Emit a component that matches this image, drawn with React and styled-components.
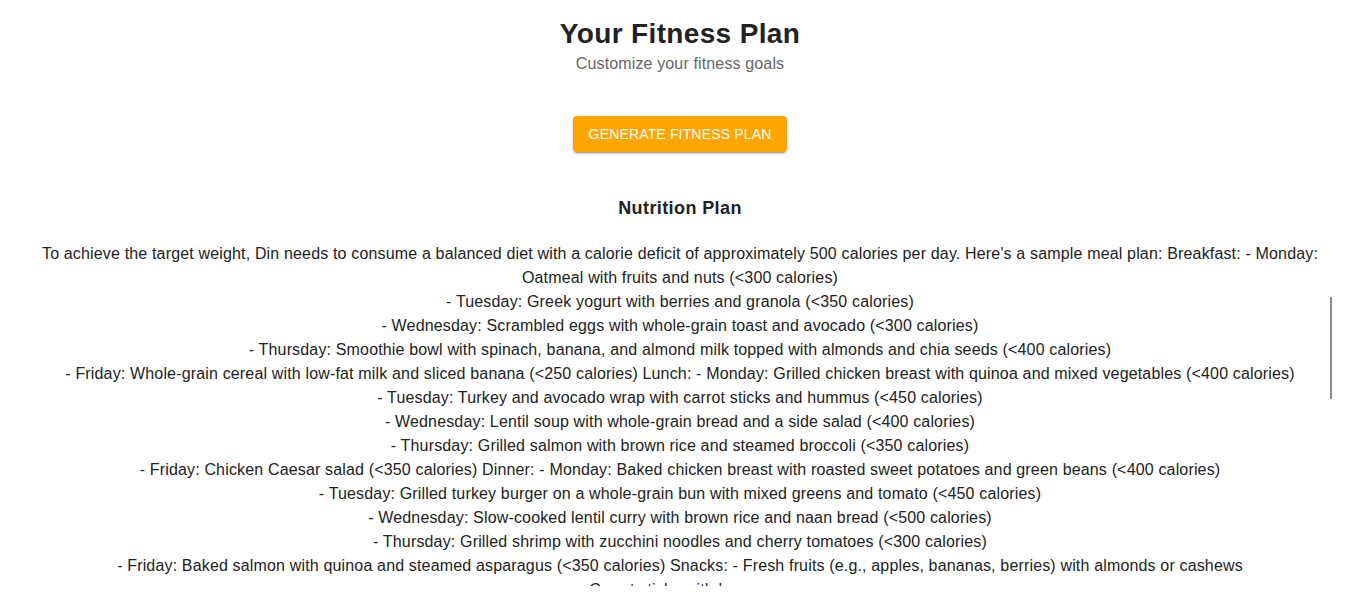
import React from "react";
import styled, { createGlobalStyle } from "styled-components";

const Global = createGlobalStyle`
  html, body { margin: 0; padding: 0; background: #fff; }
  body { font-family: "Liberation Sans", Arial, sans-serif; color: #222; overflow: hidden; }
`;

const Page = styled.main`
  display: flex;
  flex-direction: column;
  align-items: center;
  padding: 18px 14px 0 20px;
  height: 604px;
  box-sizing: border-box;
`;

const Title = styled.h1`
  margin: 0;
  font-size: 28px;
  line-height: 32px;
  font-weight: 700;
  letter-spacing: 0.35px;
  color: #222;
`;

const Subtitle = styled.p`
  margin: 5px 0 0;
  font-size: 16px;
  line-height: 18px;
  letter-spacing: 0.14px;
  color: #666;
`;

const GenerateButton = styled.button`
  margin-top: 43px;
  height: 36px;
  padding: 0 16px;
  border: none;
  border-radius: 4px;
  background: #ffa500;
  color: #fff;
  font-family: "Liberation Sans", Arial, sans-serif;
  font-size: 14px;
  letter-spacing: 0.16px;
  text-transform: uppercase;
  cursor: pointer;
  box-shadow: 0 3px 1px -2px rgba(0,0,0,0.2), 0 2px 2px 0 rgba(0,0,0,0.14), 0 1px 5px 0 rgba(0,0,0,0.12);
`;

const SectionTitle = styled.h2`
  margin: 46px 0 0;
  font-size: 18px;
  line-height: 21px;
  font-weight: 700;
  letter-spacing: 0.4px;
  color: #222;
`;

const ScrollArea = styled.div`
  position: relative;
  margin-top: 23px;
  width: 100%;
  height: 344px;
  overflow: hidden;
`;

const PlanText = styled.p`
  margin: 0;
  font-size: 16px;
  line-height: 24px;
  letter-spacing: 0.16px;
  text-align: center;
  white-space: pre-line;
  color: #222;
`;

const Thumb = styled.div`
  position: absolute;
  right: 8px;
  top: 55px;
  width: 2px;
  height: 102px;
  background: #8a8a8a;
`;

const plan = `To achieve the target weight, Din needs to consume a balanced diet with a calorie deficit of approximately 500 calories per day. Here's a sample meal plan: Breakfast: - Monday: Oatmeal with fruits and nuts (<300 calories)
- Tuesday: Greek yogurt with berries and granola (<350 calories)
- Wednesday: Scrambled eggs with whole-grain toast and avocado (<300 calories)
- Thursday: Smoothie bowl with spinach, banana, and almond milk topped with almonds and chia seeds (<400 calories)
- Friday: Whole-grain cereal with low-fat milk and sliced banana (<250 calories) Lunch: - Monday: Grilled chicken breast with quinoa and mixed vegetables (<400 calories)
- Tuesday: Turkey and avocado wrap with carrot sticks and hummus (<450 calories)
- Wednesday: Lentil soup with whole-grain bread and a side salad (<400 calories)
- Thursday: Grilled salmon with brown rice and steamed broccoli (<350 calories)
- Friday: Chicken Caesar salad (<350 calories) Dinner: - Monday: Baked chicken breast with roasted sweet potatoes and green beans (<400 calories)
- Tuesday: Grilled turkey burger on a whole-grain bun with mixed greens and tomato (<450 calories)
- Wednesday: Slow-cooked lentil curry with brown rice and naan bread (<500 calories)
- Thursday: Grilled shrimp with zucchini noodles and cherry tomatoes (<300 calories)
- Friday: Baked salmon with quinoa and steamed asparagus (<350 calories) Snacks: - Fresh fruits (e.g., apples, bananas, berries) with almonds or cashews
- Carrot sticks with hummus
- Greek yogurt with honey`;

export default function App() {
  return (
    <>
      <Global />
      <Page>
        <Title>Your Fitness Plan</Title>
        <Subtitle>Customize your fitness goals</Subtitle>
        <GenerateButton>Generate Fitness Plan</GenerateButton>
        <SectionTitle>Nutrition Plan</SectionTitle>
        <ScrollArea>
          <PlanText>{plan}</PlanText>
          <Thumb />
        </ScrollArea>
      </Page>
    </>
  );
}
